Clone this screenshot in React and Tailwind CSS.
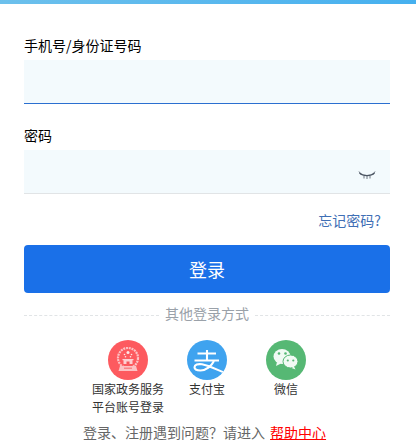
import { useState } from 'react'

// Closed eye at the right of the password field.
function EyeClosed() {
  return (
    <svg width="18" height="9" viewBox="0 0 18 9" fill="none" stroke="#4b5563" strokeWidth="1.1">
      <path d="M1.500 2C5 5.500 13 5.500 16.500 2" />
      <path d="M1 0.500l2 3M6 4.500v3M12 4.500v3M17 0.500l-2 3M9 5v3" strokeWidth="0.8" />
    </svg>
  )
}

function Emblem() {
  return (
    <div className="flex h-10 w-10 items-center justify-center rounded-full bg-[#fd5a5f]">
      <svg width="24" height="28" viewBox="0 0 24 28" fill="none" opacity="0.85">
        <circle cx="12" cy="12" r="10" stroke="#fcd5d6" strokeWidth="2.2" strokeDasharray="2 0.8" />
        <circle cx="12" cy="6.500" r="1.500" fill="#fff" />
        <circle cx="8.500" cy="8.500" r="0.800" fill="#fff" />
        <circle cx="15.500" cy="8.500" r="0.800" fill="#fff" />
        <circle cx="9.500" cy="10.800" r="0.800" fill="#fff" />
        <circle cx="14.500" cy="10.800" r="0.800" fill="#fff" />
        <path d="M6.500 13h11v1.200h-11zM7.500 14.200h9V18h-9z" fill="#fde4e5" />
        <path d="M10.500 15.500h3V18h-3z" fill="#f4565b" />
        <path d="M4 20h16l1.500 5H2.500z" fill="#fcd5d6" />
        <path d="M8 21.500h8v1.500H8z" fill="#f98d90" />
      </svg>
    </div>
  )
}

function Alipay() {
  return (
    <div className="h-10 w-10 overflow-hidden rounded-full bg-[#3fa3ef]">
      <svg width="40" height="40" viewBox="0 0 40 40" fill="none" stroke="#fff" strokeWidth="2.100">
        <path d="M10.500 13.500h18.500M20 10v10.500M7.500 20.500h24.500" />
        <path d="M27 21c-2.500 5-8 9.500-13.500 9.500-3.500 0-6-1-6-3.200 0-2.600 3.500-3.600 7.500-3 7 1.200 15 5.500 24 9" />
      </svg>
    </div>
  )
}

function Wechat() {
  return (
    <div className="h-10 w-10 overflow-hidden rounded-full bg-[#56b874]">
      <svg width="40" height="40" viewBox="0 0 40 40">
        <ellipse cx="16" cy="16.500" rx="8.500" ry="7.500" fill="#f1faf4" />
        <path d="M11 22l-1 4 5-2.500z" fill="#f1faf4" />
        <ellipse cx="24.500" cy="21.500" rx="7.500" ry="6.500" fill="#f1faf4" stroke="#56b874" strokeWidth="1" />
        <path d="M28 26.500l1.500 3-4-1.500z" fill="#f1faf4" />
        <circle cx="13" cy="13.500" r="1.300" fill="#56b874" />
        <circle cx="19.500" cy="13.500" r="1.300" fill="#56b874" />
        <circle cx="21.800" cy="20.500" r="1.100" fill="#56b874" />
        <circle cx="27.300" cy="20.500" r="1.100" fill="#56b874" />
      </svg>
    </div>
  )
}

export default function App() {
  const [account, setAccount] = useState('')
  const [password, setPassword] = useState('')

  const others = [
    { id: 'gov', icon: <Emblem />, lines: ['国家政务服务', '平台账号登录'] },
    { id: 'alipay', icon: <Alipay />, lines: ['支付宝'] },
    { id: 'wechat', icon: <Wechat />, lines: ['微信'] },
  ]

  return (
    <div className="h-[443px] w-[416px] overflow-hidden bg-white font-['Noto_Sans_CJK_SC',sans-serif]">
      <div className="h-1 bg-gradient-to-r from-[#6cc0ec] to-[#45b0ef]" />
      <div className="pl-6 pr-[26px] pt-[30px]">
        <label className="block">
          <span className="mb-1 block text-sm leading-[22px] text-black">手机号/身份证号码</span>
          <input
            value={account}
            onChange={(e) => setAccount(e.target.value)}
            className="block h-11 w-full border-b border-[#2a6fd0] bg-[#f3fafd] px-3 outline-none"
          />
        </label>
        <label className="mt-5 block">
          <span className="mb-1 block text-sm leading-[22px] text-black">密码</span>
          <span className="flex h-11 w-full items-center border-b border-[#e1e4e6] bg-[#f3fafd]">
            <input
              type="password"
              value={password}
              onChange={(e) => setPassword(e.target.value)}
              className="h-full min-w-0 flex-1 bg-transparent px-3 outline-none"
            />
            <span className="mt-[7px] mr-[14px] flex">
              <EyeClosed />
            </span>
          </span>
        </label>
        <div className="mt-4 pr-[9px] text-right text-sm leading-5 text-[#3f6fb5]">忘记密码?</div>
        <button className="mt-[15px] block h-12 w-full rounded bg-[#1a70e8] text-lg text-white">登录</button>
        <div className="mt-3 flex items-start gap-[6px]">
          <div className="mt-[10px] flex-1 border-t border-dashed border-[#e1e4e6]" />
          <span className="text-sm leading-4 text-[#9aa1a9]">其他登录方式</span>
          <div className="mt-[10px] flex-1 border-t border-dashed border-[#e1e4e6]" />
        </div>
        <div className="mt-[19px] flex justify-center gap-[39px]">
          {others.map((o) => (
            <div key={o.id} className="flex w-10 flex-col items-center">
              {o.icon}
              <div className="whitespace-nowrap text-center text-xs leading-[18px] text-[#333]">
                {o.lines.map((l) => (
                  <div key={l}>{l}</div>
                ))}
              </div>
            </div>
          ))}
        </div>
        <div className="mt-[6px] pr-[5px] text-center text-sm leading-5 text-[#666]">
          登录、注册遇到问题？请进入 <a className="ml-[2px] text-[#f00] underline">帮助中心</a>
        </div>
      </div>
    </div>
  )
}
